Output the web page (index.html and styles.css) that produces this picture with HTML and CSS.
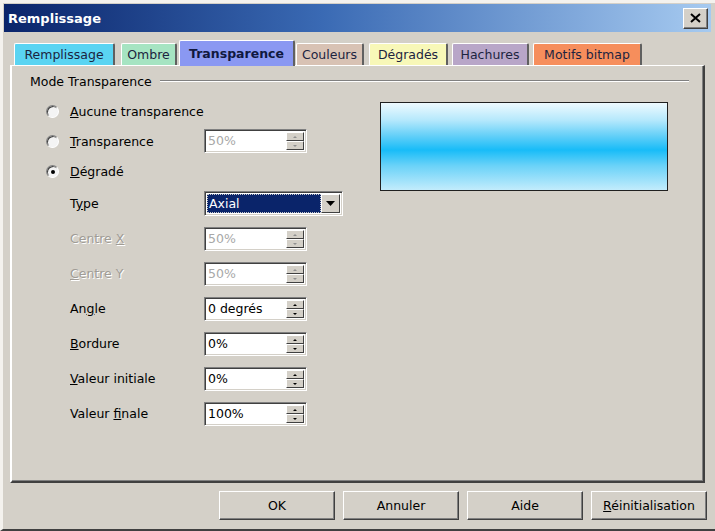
FILE: index.html
```html
<!DOCTYPE html>
<html lang="fr">
<head>
  <meta charset="UTF-8">
  <title>Remplissage</title>
  <link rel="stylesheet" href="styles.css">
</head>
<body>
  <div class="fenetre">
    <div class="titre">
      <span class="titre-texte">Remplissage</span>
      <span class="fermer">
        <svg width="11" height="10" viewBox="0 0 11 10"><path d="M1 1 L10 9 M10 1 L1 9" stroke="#000" stroke-width="2"/></svg>
      </span>
    </div>

    <div class="onglets">
      <div class="onglet o-remp">Remplissage</div>
      <div class="onglet o-ombre">Ombre</div>
      <div class="onglet o-transp actif">Transparence</div>
      <div class="onglet o-coul">Couleurs</div>
      <div class="onglet o-degr">Dégradés</div>
      <div class="onglet o-hach">Hachures</div>
      <div class="onglet o-motif">Motifs bitmap</div>
    </div>

    <div class="panneau">
      <div class="groupe">
        <span>Mode Transparence</span>
        <span class="trait"></span>
      </div>

      <div class="contenu">
        <div class="formulaire">
          <div class="ligne radio-ligne">
            <span class="radio"></span>
            <span class="etiq"><u>A</u>ucune transparence</span>
          </div>
          <div class="ligne radio-ligne">
            <span class="radio"></span>
            <span class="etiq"><u>T</u>ransparence</span>
            <div class="champ inactif"><span class="valeur">50%</span><span class="spin"><i></i><i></i></span></div>
          </div>
          <div class="ligne radio-ligne">
            <span class="radio coche"></span>
            <span class="etiq"><u>D</u>égradé</span>
          </div>

          <div class="ligne">
            <span class="vide"></span>
            <span class="etiq">T<u>y</u>pe</span>
            <div class="liste">
              <span class="choix">Axial</span>
              <span class="fleche"><svg width="9" height="5" viewBox="0 0 9 5"><path d="M0 0 H9 L4.5 5 Z" fill="#000"/></svg></span>
            </div>
          </div>
          <div class="ligne">
            <span class="vide"></span>
            <span class="etiq grise">Centre <u>X</u></span>
            <div class="champ inactif"><span class="valeur">50%</span><span class="spin"><i></i><i></i></span></div>
          </div>
          <div class="ligne">
            <span class="vide"></span>
            <span class="etiq grise"><u>C</u>entre Y</span>
            <div class="champ inactif"><span class="valeur">50%</span><span class="spin"><i></i><i></i></span></div>
          </div>
          <div class="ligne">
            <span class="vide"></span>
            <span class="etiq">An<u>g</u>le</span>
            <div class="champ"><span class="valeur">0 degrés</span><span class="spin"><i></i><i></i></span></div>
          </div>
          <div class="ligne">
            <span class="vide"></span>
            <span class="etiq"><u>B</u>ordure</span>
            <div class="champ"><span class="valeur">0%</span><span class="spin"><i></i><i></i></span></div>
          </div>
          <div class="ligne">
            <span class="vide"></span>
            <span class="etiq"><u>V</u>aleur initiale</span>
            <div class="champ"><span class="valeur">0%</span><span class="spin"><i></i><i></i></span></div>
          </div>
          <div class="ligne">
            <span class="vide"></span>
            <span class="etiq">Valeur <u>f</u>inale</span>
            <div class="champ"><span class="valeur">100%</span><span class="spin"><i></i><i></i></span></div>
          </div>
        </div>

        <div class="apercu"></div>
      </div>
    </div>

    <div class="boutons">
      <button class="bouton">OK</button>
      <button class="bouton">Annuler</button>
      <button class="bouton">Aide</button>
      <button class="bouton"><u>R</u>éinitialisation</button>
    </div>
  </div>
</body>
</html>
```

FILE: styles.css
```css
body {
  margin: 0;
  background-color: #d4d0c8;
  font-family: "DejaVu Sans", Verdana, sans-serif;
  font-size: 12.5px;
  color: #000;
}

.fenetre {
  height: 531px;
  box-sizing: border-box;
  padding: 1px 4px 0 1px;
  border-top: 3px solid #f4f2ee;
  border-left: 3px solid #f4f2ee;
  border-bottom: 2px solid #404040;
}

.titre {
  height: 28px;
  background: linear-gradient(to right, #0a246a, #3a6ab4 45%, #a6caf0);
  display: flex;
  align-items: center;
  justify-content: space-between;
  padding: 0 3px 0 4px;
}

.titre-texte {
  color: #fff;
  font-weight: bold;
  font-size: 13px;
}

.fermer {
  width: 23px;
  height: 19px;
  background: #d4d0c8;
  border: 1px solid;
  border-color: #fff #404040 #404040 #fff;
  box-shadow: inset -1px -1px #808080;
  display: flex;
  align-items: center;
  justify-content: center;
}

/* onglets */
.onglets {
  display: flex;
  align-items: flex-end;
  height: 33px;
  padding-left: 10px;
}

.onglet {
  height: 22px;
  box-sizing: border-box;
  display: flex;
  align-items: center;
  justify-content: center;
  border-top: 1px solid #fff;
  border-left: 1px solid #fff;
  border-right: 2px solid #606060;
  color: #1c2440;
  border-radius: 2px 2px 0 0;
}

.o-remp  { width: 101px; background: #5ad4f2; }
.o-ombre { width: 56px; margin-left: 6px; background: #a6e4c2; }
.o-transp { width: 116px; margin-left: 2px; background: #8a98f2; }
.o-coul  { width: 68px; margin-left: 1px; background: #d8c2b4; }
.o-degr  { width: 79px; margin-left: 5px; background: #f8f8b8; }
.o-hach  { width: 77px; margin-left: 4px; background: #b8a6c8; }
.o-motif { width: 109px; margin-left: 4px; background: #f68e5c; }

.onglet.actif {
  height: 26px;
  font-weight: bold;
  color: #101840;
  position: relative;
  top: 1px;
}

/* panneau */
.panneau {
  margin: 0 6px 0 6px;
  height: 418px;
  box-sizing: border-box;
  border-top: 1px solid #fff;
  border-left: 2px solid #fff;
  border-right: 2px solid #404040;
  border-bottom: 2px solid #404040;
  box-shadow: inset -1px -1px #808080;
}

.groupe {
  display: flex;
  align-items: center;
  height: 30px;
  padding: 0 14px 0 18px;
}

.groupe span:first-child {
  margin-right: 8px;
}

.trait {
  flex: 1;
  border-top: 1px solid #808080;
  border-bottom: 1px solid #fff;
}

.contenu {
  display: flex;
}

.formulaire {
  width: 334px;
  padding-left: 34px;
}

.ligne {
  height: 35px;
  display: flex;
  align-items: center;
}

.radio-ligne {
  height: 30px;
}

.radio, .vide {
  width: 24px;
  flex: none;
}

.radio {
  width: 11px;
  height: 11px;
  margin-right: 11px;
  border-radius: 50%;
  border: 1px solid;
  border-color: #808080 #fff #fff #808080;
  background: #f4f4f4;
  box-shadow: inset 1px 1px #404040;
  position: relative;
}

.radio.coche::after {
  content: "";
  position: absolute;
  left: 4px;
  top: 4px;
  width: 4px;
  height: 4px;
  border-radius: 50%;
  background: #000;
}

.etiq {
  width: 134px;
  flex: none;
}

.etiq.grise {
  color: #a09c96;
  text-shadow: 1px 1px #fff;
}

/* champs numeriques */
.champ {
  width: 103px;
  height: 24px;
  box-sizing: border-box;
  display: flex;
  background: #fff;
  border: 1px solid;
  border-color: #808080 #fff #fff #808080;
  box-shadow: inset 1px 1px #404040, inset -1px -1px #d4d0c8;
  padding: 2px 2px 2px 3px;
}

.valeur {
  flex: 1;
  line-height: 18px;
}

.champ.inactif .valeur {
  color: #a8a8a8;
}

.spin {
  width: 18px;
  display: flex;
  flex-direction: column;
}

.spin i {
  flex: 1;
  background: #d4d0c8;
  border: 1px solid;
  border-color: #fff #404040 #404040 #fff;
  position: relative;
}

.spin i::after {
  content: "";
  position: absolute;
  left: 6px;
  top: 3px;
  border-left: 2px solid transparent;
  border-right: 2px solid transparent;
  border-bottom: 2px solid #000;
}

.spin i + i::after {
  border-bottom: none;
  border-top: 2px solid #000;
}

.champ.inactif .spin i::after {
  border-bottom-color: #909090;
  border-top-color: #909090;
}

/* liste deroulante */
.liste {
  width: 139px;
  height: 25px;
  box-sizing: border-box;
  display: flex;
  background: #fff;
  border: 1px solid;
  border-color: #808080 #fff #fff #808080;
  box-shadow: inset 1px 1px #404040, inset -1px -1px #d4d0c8;
  padding: 2px;
}

.choix {
  flex: 1;
  background: #0a246a;
  color: #fff;
  outline: 1px dotted #c8c8c8;
  outline-offset: -1px;
  padding-left: 2px;
  line-height: 19px;
}

.fleche {
  width: 17px;
  background: #d4d0c8;
  border: 1px solid;
  border-color: #fff #404040 #404040 #fff;
  display: flex;
  align-items: center;
  justify-content: center;
}

/* apercu */
.apercu {
  width: 286px;
  height: 87px;
  margin-top: 6px;
  border: 1px solid #202020;
  background: linear-gradient(to bottom, #eefaff 0%, #b4e8fc 20%, #62cff8 38%, #18bcf8 54%, #6ad2f8 72%, #c2ecfc 100%);
}

/* boutons du bas */
.boutons {
  display: flex;
  justify-content: flex-end;
  gap: 8px;
  padding: 8px 4px 0 0;
}

.bouton {
  width: 116px;
  height: 29px;
  font-family: inherit;
  font-size: 12.5px;
  color: #000;
  background: #d4d0c8;
  border: 1px solid;
  border-color: #fff #404040 #404040 #fff;
  box-shadow: inset -1px -1px #808080;
  padding: 0;
}
```
